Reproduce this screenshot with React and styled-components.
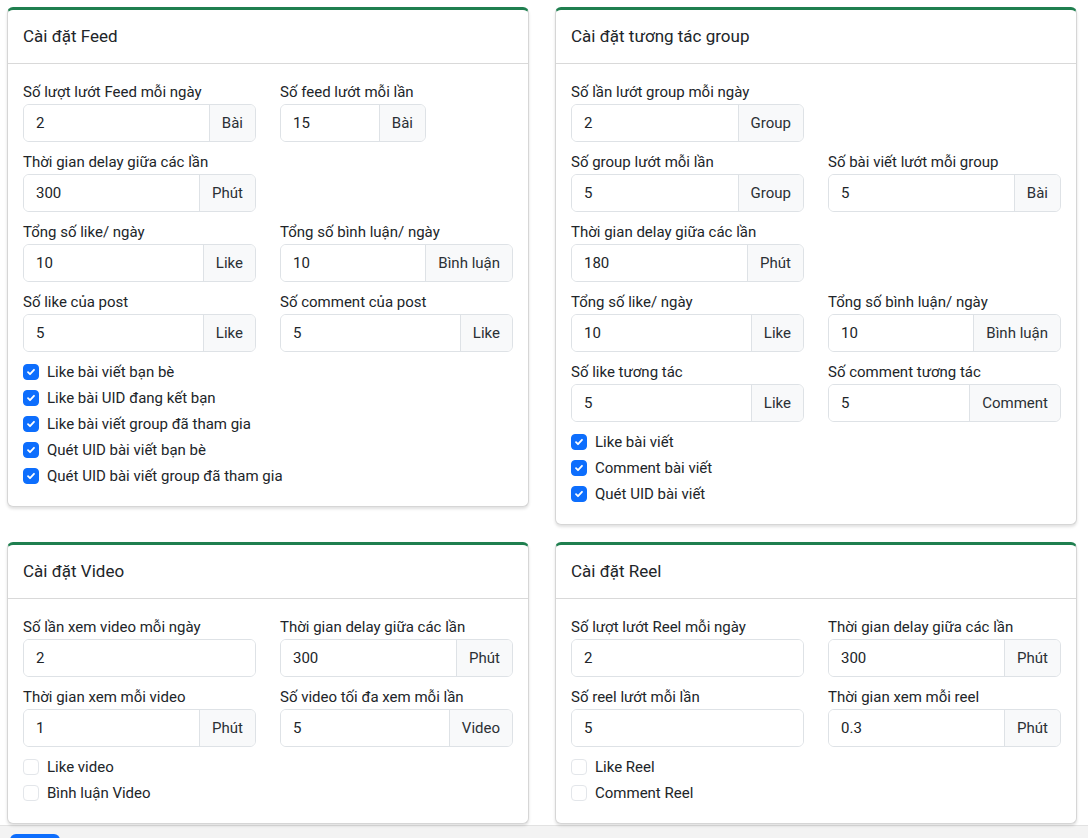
import React from "react";
import styled, { createGlobalStyle } from "styled-components";

const GlobalStyle = createGlobalStyle`
  * { box-sizing: border-box; }
  body {
    margin: 0;
    background: #ffffff;
    font-family: Roboto, "Noto Sans", sans-serif;
    color: #212529;
    font-size: 15px;
  }
`;

const Page = styled.div`
  padding: 7px 11px 0 7px;
`;

const Grid = styled.div`
  display: grid;
  grid-template-columns: 522px 522px;
  column-gap: 26px;
  row-gap: 17px;
  align-items: start;
`;

const Card = styled.div`
  background: #fff;
  border: 1px solid #d6d6d6;
  border-top: 3px solid #1f7f4f;
  border-radius: 6px;
  box-shadow: 0 2px 3px rgba(0, 0, 0, 0.12);
`;

const CardHeader = styled.div`
  padding: 0 15px 2px;
  height: 54px;
  display: flex;
  align-items: center;
  font-size: 17px;
  border-bottom: 1px solid #d9d9d9;
`;

const CardBody = styled.div`
  padding: 16px 15px;
`;

const Fields = styled.div`
  display: grid;
  grid-template-columns: minmax(0, 1fr) minmax(0, 1fr);
  column-gap: 24px;
`;

const Field = styled.div`
  margin-bottom: 8px;
  min-width: 0;
`;

const Label = styled.div`
  height: 24px;
  line-height: 24px;
  font-size: 15px;
  white-space: nowrap;
`;

const InputGroup = styled.div`
  display: flex;
  height: 38px;
  width: ${({ $width }) => $width || "100%"};
  border: 1px solid #dee2e6;
  border-radius: 6px;
  overflow: hidden;
`;

const Input = styled.input`
  flex: 1;
  min-width: 0;
  border: none;
  outline: none;
  padding: 0 12px;
  font-family: inherit;
  font-size: 15px;
  color: #212529;
  background: #fff;
`;

const Addon = styled.span`
  display: flex;
  align-items: center;
  padding: 0 12px;
  background: #f8f9fa;
  border-left: 1px solid #dee2e6;
  font-size: 15px;
  color: #2b3035;
  white-space: nowrap;
`;

const Checks = styled.div``;

const CheckRow = styled.label`
  display: flex;
  align-items: center;
  gap: 8px;
  height: 24px;
  margin-bottom: 2px;
  font-size: 15px;
`;

const Box = styled.span`
  width: 16px;
  height: 16px;
  border-radius: 4px;
  display: flex;
  align-items: center;
  justify-content: center;
  background: ${({ $on }) => ($on ? "#0d6efd" : "#fff")};
  border: 1px solid ${({ $on }) => ($on ? "#0d6efd" : "#e3e6ea")};
`;

const Footer = styled.div`
  margin-top: 1px;
  background: #f3f3f3;
  border-top: 1px solid #e2e2e2;
  padding: 8px 0 0 10px;
  height: 40px;
`;

const SaveButton = styled.button`
  width: 50px;
  height: 34px;
  border: none;
  border-radius: 6px;
  background: #0d6efd;
`;

const Check = ({ on, children }) => (
  <CheckRow>
    <Box $on={on}>
      {on && (
        <svg width="10" height="10" viewBox="0 0 10 10">
          <path d="M2 5.2l2 2 4-4.4" stroke="#fff" strokeWidth="1.8" fill="none" strokeLinecap="round" strokeLinejoin="round" />
        </svg>
      )}
    </Box>
    {children}
  </CheckRow>
);

const F = ({ label, value, unit, width }) => (
  <Field>
    <Label>{label}</Label>
    <InputGroup $width={width}>
      <Input defaultValue={value} />
      {unit && <Addon>{unit}</Addon>}
    </InputGroup>
  </Field>
);

const Empty = () => <div />;

export default function App() {
  return (
    <>
      <GlobalStyle />
      <Page>
        <Grid>
          <Card>
            <CardHeader>Cài đặt Feed</CardHeader>
            <CardBody>
              <Fields>
                <F label="Số lượt lướt Feed mỗi ngày" value="2" unit="Bài" />
                <F label="Số feed lướt mỗi lần" value="15" unit="Bài" width="146px" />
                <F label="Thời gian delay giữa các lần" value="300" unit="Phút" />
                <Empty />
                <F label="Tổng số like/ ngày" value="10" unit="Like" />
                <F label="Tổng số bình luận/ ngày" value="10" unit="Bình luận" />
                <F label="Số like của post" value="5" unit="Like" />
                <F label="Số comment của post" value="5" unit="Like" />
              </Fields>
              <Checks>
                <Check on>Like bài viết bạn bè</Check>
                <Check on>Like bài UID đang kết bạn</Check>
                <Check on>Like bài viết group đã tham gia</Check>
                <Check on>Quét UID bài viết bạn bè</Check>
                <Check on>Quét UID bài viết group đã tham gia</Check>
              </Checks>
            </CardBody>
          </Card>

          <Card>
            <CardHeader>Cài đặt tương tác group</CardHeader>
            <CardBody>
              <Fields>
                <F label="Số lần lướt group mỗi ngày" value="2" unit="Group" />
                <Empty />
                <F label="Số group lướt mỗi lần" value="5" unit="Group" />
                <F label="Số bài viết lướt mỗi group" value="5" unit="Bài" />
                <F label="Thời gian delay giữa các lần" value="180" unit="Phút" />
                <Empty />
                <F label="Tổng số like/ ngày" value="10" unit="Like" />
                <F label="Tổng số bình luận/ ngày" value="10" unit="Bình luận" />
                <F label="Số like tương tác" value="5" unit="Like" />
                <F label="Số comment tương tác" value="5" unit="Comment" />
              </Fields>
              <Checks>
                <Check on>Like bài viết</Check>
                <Check on>Comment bài viết</Check>
                <Check on>Quét UID bài viết</Check>
              </Checks>
            </CardBody>
          </Card>

          <Card>
            <CardHeader>Cài đặt Video</CardHeader>
            <CardBody>
              <Fields>
                <F label="Số lần xem video mỗi ngày" value="2" />
                <F label="Thời gian delay giữa các lần" value="300" unit="Phút" />
                <F label="Thời gian xem mỗi video" value="1" unit="Phút" />
                <F label="Số video tối đa xem mỗi lần" value="5" unit="Video" />
              </Fields>
              <Checks>
                <Check>Like video</Check>
                <Check>Bình luận Video</Check>
              </Checks>
            </CardBody>
          </Card>

          <Card>
            <CardHeader>Cài đặt Reel</CardHeader>
            <CardBody>
              <Fields>
                <F label="Số lượt lướt Reel mỗi ngày" value="2" />
                <F label="Thời gian delay giữa các lần" value="300" unit="Phút" />
                <F label="Số reel lướt mỗi lần" value="5" />
                <F label="Thời gian xem mỗi reel" value="0.3" unit="Phút" />
              </Fields>
              <Checks>
                <Check>Like Reel</Check>
                <Check>Comment Reel</Check>
              </Checks>
            </CardBody>
          </Card>
        </Grid>
      </Page>
      <Footer>
        <SaveButton />
      </Footer>
    </>
  );
}
